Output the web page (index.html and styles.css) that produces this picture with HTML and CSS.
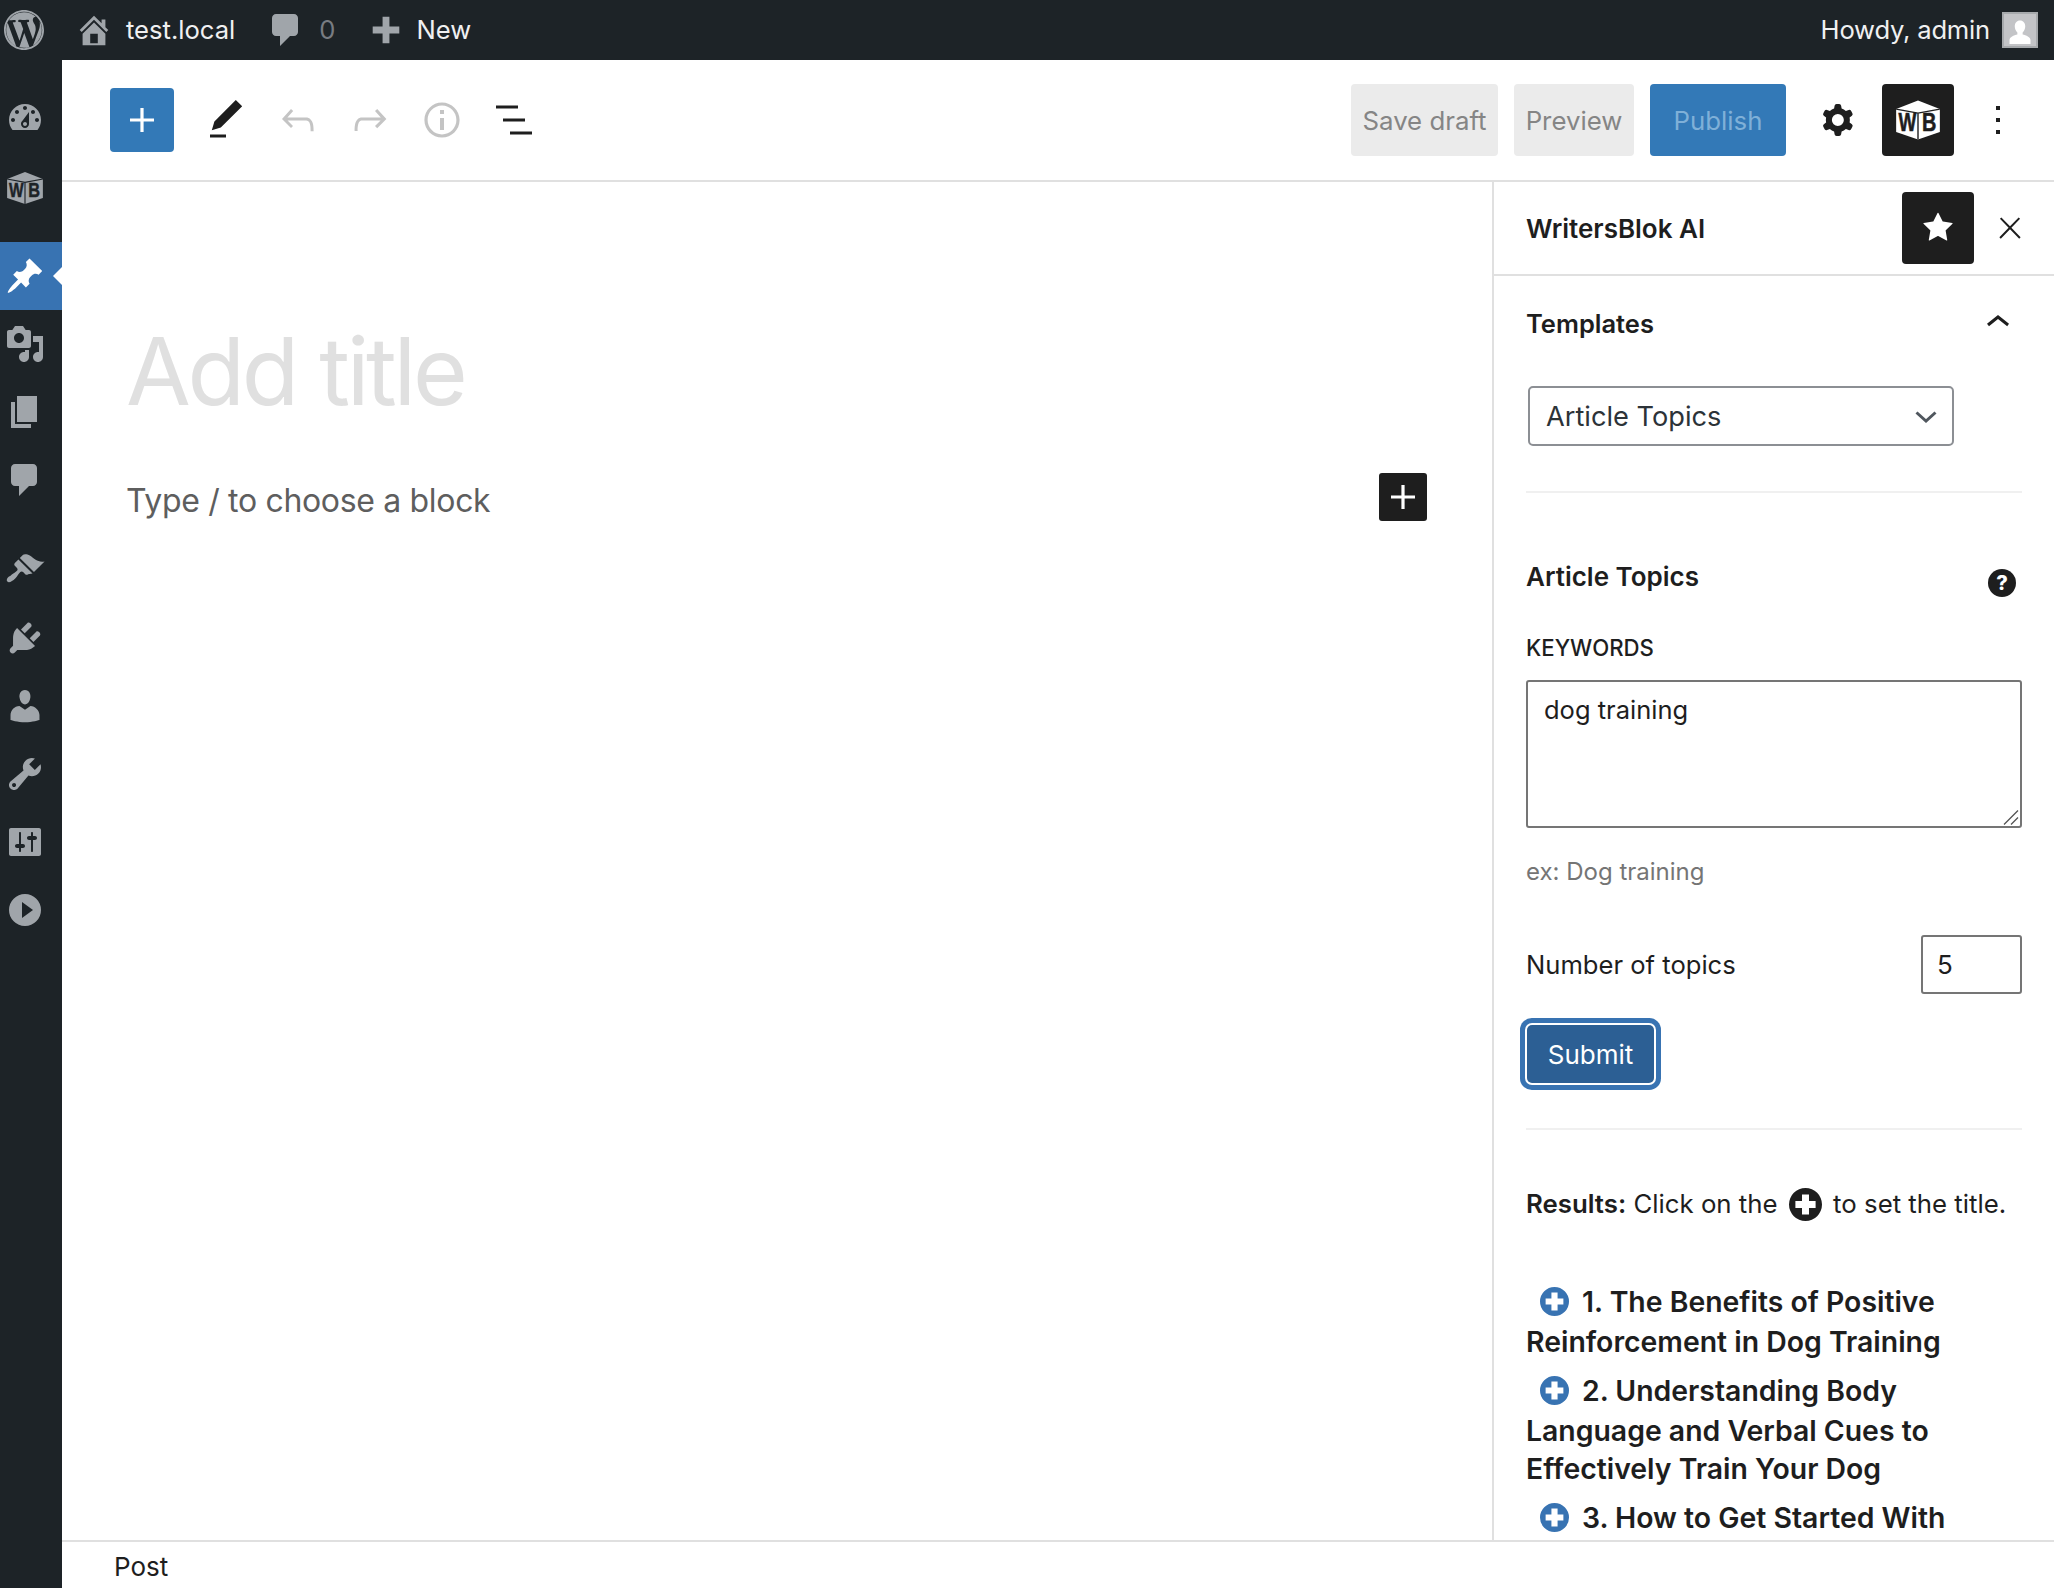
FILE: index.html
```html
<!DOCTYPE html>
<html lang="en">
<head>
    <meta charset="UTF-8">
    <title>Add New Post - test.local</title>
    <link rel="stylesheet" href="styles.css">
</head>
<body>
    <div class="adminbar">
        <svg class="bar-logo" viewBox="0 0 20 20"><path d="M10 0C4.48 0 0 4.49 0 10s4.48 10 10 10 10-4.48 10-10S15.510 0 10 0zm0 .9c5.020 0 9.100 4.080 9.100 9.100s-4.080 9.100-9.100 9.100S.9 15.020.9 10 4.980.9 10 .9zM7.780 15.370 4.370 6.220c.55-.02 1.170-.08 1.170-.08.5-.06.44-1.130-.06-1.110 0 0-1.450.11-2.370.11-.18 0-.37 0-.58-.01C4.120 2.690 6.870 1.110 10 1.110c2.330 0 4.450.87 6.050 2.340-.68-.11-1.650.39-1.650 1.580 0 .74.45 1.360.9 2.100.35.61.55 1.360.55 2.460 0 1.490-1.400 5-1.400 5l-3.030-8.370c.54-.02.82-.17.82-.17.5-.05.44-1.250-.06-1.220 0 0-1.440.12-2.380.12-.87 0-2.330-.12-2.330-.12-.5-.03-.56 1.200-.06 1.220l.92.08 1.260 3.410zM17.410 10c.24-.64.74-1.870.43-4.250.7 1.290 1.050 2.710 1.050 4.250 0 3.290-1.730 6.240-4.400 7.780.97-2.590 1.940-5.200 2.920-7.780zM6.100 18.090C3.120 16.650 1.110 13.530 1.110 10c0-1.300.23-2.480.72-3.590 1.420 3.890 2.840 7.790 4.270 11.680zm4.030-6.630 2.580 6.980c-.86.29-1.760.45-2.710.45-.79 0-1.570-.11-2.290-.33.81-2.380 1.620-4.740 2.420-7.100z" fill-rule="evenodd"/></svg>
        <svg class="bar-home" viewBox="0 0 20 20"><path d="M16 8.500l1.530 1.530-1.060 1.060L10 4.620l-6.470 6.470-1.060-1.060L10 2.500l4 4v-2h2v4zm-6-2.460 6 5.990V18H4v-5.970zM12 17v-5H8v5h4z"/></svg>
        <span class="bar-site">test.local</span>
        <svg class="bar-comment" viewBox="0 0 20 20"><path d="M5 2h9c1.100 0 2 .9 2 2v7c0 1.100-.9 2-2 2h-2l-5 5v-5H5c-1.100 0-2-.9-2-2V4c0-1.100.9-2 2-2z"/></svg>
        <span class="bar-count">0</span>
        <svg class="bar-plus" viewBox="0 0 20 20"><path d="M17 8.200v3.600h-5.200V17H8.200v-5.200H3V8.200h5.200V3h3.600v5.200z"/></svg>
        <span class="bar-new">New</span>
        <span class="bar-howdy">Howdy, admin</span>
        <span class="avatar">
            <svg viewBox="0 0 32 32"><path d="M16 5c-3.600 0-6 2.900-6 6.800 0 3 1.200 5.400 3 7v2.400c-4 1-9 2.800-9 6.300V32h24v-4.500c0-3.500-5-5.300-9-6.300v-2.400c1.800-1.600 3-4 3-7C22 7.900 19.600 5 16 5z"/></svg>
        </span>
    </div>

    <div class="wrap">
        <nav class="adminmenu">
            <a class="menu-item menu-dash"><svg viewBox="0 0 20 20"><path fill-rule="evenodd" d="M3.760 16h12.480c1.100-1.370 1.760-3.110 1.760-5 0-4.420-3.580-8-8-8s-8 3.580-8 8c0 1.890.66 3.630 1.760 5zM10 4c.55 0 1 .45 1 1s-.45 1-1 1-1-.45-1-1 .45-1 1-1zM6 6c.55 0 1 .45 1 1s-.45 1-1 1-1-.45-1-1 .45-1 1-1zm8 0c.55 0 1 .45 1 1s-.45 1-1 1-1-.45-1-1 .45-1 1-1zm-5.370 5.550L12 7v6c0 1.100-.9 2-2 2s-2-.9-2-2c0-.57.24-1.080.63-1.450zM4 10c.55 0 1 .45 1 1s-.45 1-1 1-1-.45-1-1 .45-1 1-1zm12 0c.55 0 1 .45 1 1s-.45 1-1 1-1-.45-1-1 .45-1 1-1zm-5 3c0-.55-.45-1-1-1s-1 .45-1 1 .45 1 1 1 1-.45 1-1z"/></svg></a>
            <a class="menu-item">
                <svg class="cube cube-menu" viewBox="0 0 40 34"><path class="cube-body" d="M20 0 39 7.500V27.500L20 34 1 27.500V7.500z"/><path class="cube-line" d="M1 7.500 20 11l19-3.500M20 11v23"/><text x="3" y="27" textLength="15.500" lengthAdjust="spacingAndGlyphs">W</text><text x="23.500" y="27" textLength="12.500" lengthAdjust="spacingAndGlyphs">B</text></svg>
            </a>
            <div class="menu-sep"></div>
            <a class="menu-item active"><svg viewBox="0 0 20 20"><path d="M10.440 3.020l1.820-1.820 6.360 6.350-1.830 1.820c-1.050-.68-2.480-.57-3.410.36l-.75.75c-.92.93-1.040 2.350-.35 3.410l-1.830 1.820-2.410-2.410-2.800 2.790c-.42.42-3.380 2.710-3.800 2.290s1.860-3.390 2.280-3.810l2.790-2.790L4.100 9.360l1.830-1.820c1.050.69 2.480.57 3.400-.36l.75-.75c.93-.92 1.050-2.350.36-3.410z"/></svg></a>
            <a class="menu-item"><svg viewBox="0 0 20 20"><path d="M13 11V4c0-.55-.45-1-1-1h-1.670L9 1H5L3.670 3H2c-.55 0-1 .45-1 1v7c0 .55.45 1 1 1h10c.55 0 1-.45 1-1zM7 4.500c1.380 0 2.500 1.120 2.500 2.500S8.380 9.500 7 9.500 4.500 8.380 4.500 7 5.620 4.500 7 4.500zM14 6h5v10.500c0 1.380-1.120 2.500-2.500 2.500S14 17.880 14 16.500s1.120-2.500 2.500-2.500c.17 0 .34.02.5.05V9h-3V6zm-4 8.050V13h2v3.500c0 1.380-1.120 2.500-2.500 2.500S7 17.880 7 16.500 8.120 14 9.500 14c.17 0 .34.02.5.05z"/></svg></a>
            <a class="menu-item"><svg viewBox="0 0 20 20"><path d="M6 15V2h10v13H6zm-1 1h8v2H3V5h2v11z"/></svg></a>
            <a class="menu-item"><svg viewBox="0 0 20 20"><path d="M5 2h9c1.100 0 2 .9 2 2v7c0 1.100-.9 2-2 2h-2l-5 5v-5H5c-1.100 0-2-.9-2-2V4c0-1.100.9-2 2-2z"/></svg></a>
            <div class="menu-sep menu-sep-small"></div>
            <a class="menu-item"><svg viewBox="0 0 20 20"><path d="M14.480 11.060L7.410 3.990l1.500-1.500c.5-.56 2.300-.47 3.510.32 1.210.8 1.430 1.280 2.910 2.100 1.180.64 2.450 1.260 4.450.85zm-.71.71L6.700 4.700 4.930 6.470c-.39.39-.39 1.020 0 1.410l1.060 1.060c.39.39.39 1.030 0 1.420-.6.6-1.430 1.110-2.210 1.690-.35.26-.7.53-1.010.84C1.430 13.230.4 14.980 1.200 15.800c.81.81 2.560-.22 3.910-1.570.31-.31.58-.66.85-1.010.57-.78 1.080-1.610 1.690-2.210.39-.39 1.020-.39 1.410 0l1.060 1.060c.39.39 1.020.39 1.410 0z"/></svg></a>
            <a class="menu-item"><svg viewBox="0 0 20 20"><path d="M13.110 4.360L9.870 7.600 8 5.730l3.240-3.240c.35-.34 1.050-.2 1.560.32.52.51.66 1.210.31 1.550zm-8 1.770l.91-1.120 9.010 9.010-1.190.84c-.71.71-2.630 1.160-3.820 1.160H6.140L4.900 17.260c-.59.59-1.540.59-2.120 0-.59-.58-.59-1.530 0-2.120l1.240-1.240v-3.880c0-1.130.4-3.190 1.090-3.890zm7.260 3.970l3.240-3.240c.34-.35 1.040-.21 1.550.31.52.51.66 1.210.31 1.550l-3.240 3.250z"/></svg></a>
            <a class="menu-item"><svg viewBox="0 0 20 20"><path d="M10 9.250c-2.270 0-2.730-3.440-2.730-3.440C7 4.020 7.820 2 9.970 2c2.160 0 2.980 2.020 2.710 3.810 0 0-.41 3.440-2.680 3.440zm0 2.570L12.720 10c2.390 0 4.520 2.330 4.520 4.530v2.490s-3.650 1.130-7.240 1.130c-3.650 0-7.240-1.130-7.240-1.130v-2.490c0-2.250 1.940-4.530 4.470-4.530z"/></svg></a>
            <a class="menu-item"><svg viewBox="0 0 20 20"><path fill-rule="evenodd" d="M16.680 9.770c-1.340 1.340-3.300 1.670-4.950.99l-5.410 6.520c-.99.99-2.590.99-3.580 0s-.99-2.590 0-3.570l6.520-5.420c-.68-1.650-.35-3.610.99-4.950 1.280-1.280 3.120-1.620 4.720-1.060l-2.890 2.890 2.820 2.820 2.860-2.870c.53 1.580.18 3.390-1.080 4.670zM3.810 16.210c.4.39 1.040.39 1.430 0 .4-.4.4-1.040 0-1.430-.39-.4-1.030-.4-1.430 0-.39.39-.39 1.030 0 1.430z"/></svg></a>
            <a class="menu-item"><svg viewBox="0 0 20 20"><path fill-rule="evenodd" d="M18 16V4c0-.55-.45-1-1-1H3c-.55 0-1 .45-1 1v12c0 .55.45 1 1 1h14c.55 0 1-.45 1-1zM8 11h1c.55 0 1 .45 1 1s-.45 1-1 1H8v1.500c0 .28-.22.5-.5.5s-.5-.22-.5-.5V13H6c-.55 0-1-.45-1-1s.45-1 1-1h1V5.500c0-.28.22-.5.5-.5s.5.22.5.5V11zm5-2h-1c-.55 0-1-.45-1-1s.45-1 1-1h1V5.500c0-.28.22-.5.5-.5s.5.22.5.5V7h1c.55 0 1 .45 1 1s-.45 1-1 1h-1v5.500c0 .28-.22.5-.5.5s-.5-.22-.5-.5V9z"/></svg></a>
            <a class="menu-item"><svg viewBox="0 0 20 20"><path fill-rule="evenodd" d="M10 2a8 8 0 1 0 0 16 8 8 0 0 0 0-16zM8.500 6l5.500 4-5.500 4z"/></svg></a>
        </nav>

        <div class="editor">
            <header class="toolbar">
                <button class="tool tool-add"><svg viewBox="0 0 24 24"><path d="M18 11.200h-5.200V6h-1.600v5.200H6v1.600h5.200V18h1.600v-5.200H18z"/></svg></button>
                <button class="tool tool-edit"><svg viewBox="0 0 24 24"><path d="M20.100 5.100L16.900 2 6.200 12.700l-1.300 4.400 4.500-1.300L20.100 5.100zM4 20.800h8v-1.500H4v1.500z"/></svg></button>
                <button class="tool tool-off"><svg viewBox="0 0 24 24"><path d="M18.300 11.700c-.6-.6-1.400-.9-2.300-.9H6.700l2.900-3.300-1.100-1-4.500 5L8.500 16l1-1-2.700-2.700H16c.5 0 .9.2 1.300.5 1 1 1 3.400 1 4.500v.3h1.500v-.2c0-1.500 0-4.300-1.500-5.700z"/></svg></button>
                <button class="tool tool-off"><svg viewBox="0 0 24 24"><path d="M15.600 6.500l-1.100 1 2.900 3.300H8c-.9 0-1.700.3-2.300.9-1.400 1.500-1.400 4.200-1.400 5.600v.2h1.500v-.3c0-1.100 0-3.500 1-4.500.3-.3.7-.5 1.300-.5h9.200L14.500 15l1.100 1.100 4.600-4.600-4.600-5z"/></svg></button>
                <button class="tool tool-off"><svg viewBox="0 0 24 24"><path d="M12 3.200c-4.800 0-8.800 3.900-8.800 8.800 0 4.800 3.900 8.800 8.800 8.800 4.800 0 8.800-3.900 8.800-8.800 0-4.800-4-8.800-8.800-8.800zm0 16c-4 0-7.200-3.300-7.200-7.200C4.800 8 8 4.800 12 4.800s7.200 3.300 7.200 7.200c0 4-3.200 7.200-7.200 7.200zM11 17h2v-6h-2v6zm0-8h2V7h-2v2z"/></svg></button>
                <button class="tool"><svg viewBox="0 0 24 24"><path d="M3 4.750h11v1.500H3zM6.500 11.250h11v1.500h-11zM10 17.750h11v1.500H10z"/></svg></button>
                <div class="toolbar-right">
                    <button class="btn btn-light btn-draft">Save draft</button>
                    <button class="btn btn-light btn-preview">Preview</button>
                    <button class="btn btn-publish">Publish</button>
                    <button class="tool tool-gear"><svg viewBox="0 0 24 24"><path fill-rule="evenodd" d="M10.289 4.836A1 1 0 0 1 11.275 4h1.306a1 1 0 0 1 .987.836l.244 1.466c.787.26 1.503.679 2.108 1.218l1.393-.522a1 1 0 0 1 1.216.437l.653 1.130a1 1 0 0 1-.23 1.273l-1.148.944a6.025 6.025 0 0 1 0 2.435l1.149.946a1 1 0 0 1 .23 1.272l-.653 1.130a1 1 0 0 1-1.216.437l-1.394-.522c-.605.54-1.320.958-2.108 1.218l-.244 1.466a1 1 0 0 1-.987.836h-1.306a1 1 0 0 1-.986-.836l-.244-1.466a5.995 5.995 0 0 1-2.108-1.218l-1.394.522a1 1 0 0 1-1.217-.436l-.653-1.131a1 1 0 0 1 .23-1.272l1.149-.946a6.026 6.026 0 0 1 0-2.435l-1.148-.944a1 1 0 0 1-.23-1.272l.653-1.131a1 1 0 0 1 1.217-.437l1.393.522a5.994 5.994 0 0 1 2.108-1.218l.244-1.466zM14.929 12a3 3 0 1 1-6 0 3 3 0 0 1 6 0z"/></svg></button>
                    <button class="tool-dark tool-wb">
                        <svg class="cube cube-button" viewBox="0 0 40 34"><path class="cube-body" d="M20 0 39 7.500V27.500L20 34 1 27.500V7.500z"/><path class="cube-line" d="M1 7.500 20 11l19-3.500M20 11v23"/><text x="3" y="27" textLength="15.500" lengthAdjust="spacingAndGlyphs">W</text><text x="23.500" y="27" textLength="12.500" lengthAdjust="spacingAndGlyphs">B</text></svg>
                    </button>
                    <button class="tool tool-more"><svg viewBox="0 0 24 24"><path d="M13 19h-2v-2h2v2zm0-6h-2v-2h2v2zm0-6h-2V5h2v2z"/></svg></button>
                </div>
            </header>

            <div class="content">
                <main class="canvas">
                    <div class="post-title">Add title</div>
                    <div class="block-row">
                        <span class="block-hint">Type / to choose a block</span>
                        <button class="block-add"><svg viewBox="0 0 24 24"><path d="M18 11.200h-5.200V6h-1.600v5.200H6v1.600h5.200V18h1.600v-5.200H18z"/></svg></button>
                    </div>
                </main>

                <aside class="panel">
                    <div class="panel-head">
                        <h2 class="panel-title">WritersBlok AI</h2>
                        <button class="tool-dark tool-star"><svg viewBox="0 0 24 24"><path d="M11.776 4.454a.25.25 0 0 1 .448 0l2.069 4.192a.25.25 0 0 0 .188.137l4.626.672a.25.25 0 0 1 .139.426l-3.348 3.263a.25.25 0 0 0-.072.222l.79 4.607a.25.25 0 0 1-.362.263l-4.138-2.175a.25.25 0 0 0-.232 0l-4.138 2.175a.25.25 0 0 1-.363-.263l.79-4.607a.25.25 0 0 0-.071-.222L4.754 9.881a.25.25 0 0 1 .139-.426l4.626-.672a.25.25 0 0 0 .188-.137l2.069-4.192z"/></svg></button>
                        <button class="panel-close"><svg viewBox="0 0 24 24"><path d="M13 11.800l6.100-6.300-1-1-6.100 6.200-6.100-6.200-1 1 6.100 6.300-6.500 6.700 1 1 6.500-6.600 6.500 6.600 1-1z"/></svg></button>
                    </div>

                    <div class="panel-body">
                        <div class="section-row section-templates">
                            <h3 class="section-title">Templates</h3>
                            <svg class="chevron-up" viewBox="0 0 24 24"><path d="M6.500 12.400L12 8l5.500 4.400-.9 1.200L12 10l-4.500 3.600-1-1.200z"/></svg>
                        </div>
                        <div class="select-wrap">
                            <select class="template-select"><option>Article Topics</option></select>
                            <svg class="select-arrow" viewBox="0 0 22 12"><path d="M1.500 1.500 11 10l9.500-8.500"/></svg>
                        </div>
                        <hr class="divider divider-top">

                        <div class="section-row section-article">
                            <h3 class="section-title">Article Topics</h3>
                            <span class="help">?</span>
                        </div>
                        <label class="field-label" for="keywords">KEYWORDS</label>
                        <div class="keywords-wrap">
                            <textarea class="keywords" id="keywords">dog training</textarea>
                            <svg class="grip" viewBox="0 0 16 15"><path d="M15 .5 1 14.500M15 7.500 8 14.500"/></svg>
                        </div>
                        <p class="hint">ex: Dog training</p>
                        <div class="number-row">
                            <label for="topics">Number of topics</label>
                            <input class="number" id="topics" type="number" value="5">
                        </div>
                        <button class="submit">Submit</button>
                        <hr class="divider divider-bottom">

                        <p class="results"><b>Results:</b> Click on the <svg class="plus-dark" viewBox="0 0 32 32"><path fill-rule="evenodd" d="M16 0a16 16 0 1 0 0 32 16 16 0 0 0 0-32zm-3.400 6.200h6.800v6.400h6.400v6.800h-6.400v6.400h-6.800v-6.400H6.200v-6.800h6.400z"/></svg> to set the title.</p>

                        <ul class="topics">
                            <li><svg class="plus-blue" viewBox="0 0 32 32"><path fill-rule="evenodd" d="M16 0a16 16 0 1 0 0 32 16 16 0 0 0 0-32zm-3.400 6.200h6.800v6.400h6.400v6.800h-6.400v6.400h-6.800v-6.400H6.200v-6.800h6.400z"/></svg>1. The Benefits of Positive Reinforcement in Dog Training</li>
                            <li><svg class="plus-blue" viewBox="0 0 32 32"><path fill-rule="evenodd" d="M16 0a16 16 0 1 0 0 32 16 16 0 0 0 0-32zm-3.400 6.200h6.800v6.400h6.400v6.800h-6.400v6.400h-6.800v-6.400H6.200v-6.800h6.400z"/></svg>2. Understanding Body Language and Verbal Cues to Effectively Train Your Dog</li>
                            <li><svg class="plus-blue" viewBox="0 0 32 32"><path fill-rule="evenodd" d="M16 0a16 16 0 1 0 0 32 16 16 0 0 0 0-32zm-3.400 6.200h6.800v6.400h6.400v6.800h-6.400v6.400h-6.800v-6.400H6.200v-6.800h6.400z"/></svg>3. How to Get Started With</li>
                        </ul>
                    </div>
                </aside>
            </div>

            <footer class="footer">Post</footer>
        </div>
    </div>
</body>
</html>
```

FILE: styles.css
```css
:root {
    --bar: #1d2327;
    --menu-icon: #a0a5aa;
    --ink: #1e1e1e;
    --line: #e0e0e0;
    --blue: #3379b7;
}
* {
    box-sizing: border-box;
}
html, body {
    height: 100%;
}
body {
    margin: 0;
    display: flex;
    flex-direction: column;
    overflow: hidden;
    background: #fff;
    color: var(--ink);
    font-family: Inter, "Noto Sans", sans-serif;
    font-size: 24px;
}
button {
    padding: 0;
    border: 0;
    background: none;
    font: inherit;
}
svg {
    display: block;
    fill: currentColor;
}

/* admin bar */
.adminbar {
    flex: none;
    height: 60px;
    display: flex;
    align-items: center;
    background: var(--bar);
    color: #f0f0f1;
    font-size: 25.6px;
}
.adminbar svg {
    flex: none;
    color: var(--menu-icon);
}
.bar-site, .bar-count, .bar-new, .bar-howdy {
    padding-bottom: 2px;
}
.bar-logo {
    width: 40px;
    height: 40px;
    margin-left: 4px;
}
.bar-home {
    width: 38px;
    height: 38px;
    margin-left: 31px;
}
.bar-site {
    margin-left: 13px;
}
.bar-comment {
    width: 40px;
    height: 40px;
    margin-left: 31px;
}
.bar-count {
    margin-left: 13px;
    color: #787c82;
}
.bar-plus {
    width: 38px;
    height: 38px;
    margin-left: 32px;
}
.bar-new {
    margin-left: 11px;
}
.bar-howdy {
    margin-left: auto;
    letter-spacing: -.2px;
}
.avatar {
    width: 36px;
    height: 36px;
    margin: 0 16px 0 12px;
    padding: 2px;
    border: 2px solid #a7aaad;
    background: #c3c4c7;
    overflow: hidden;
}
.avatar svg {
    width: 100%;
    height: 100%;
    color: #fff;
}

/* left menu */
.wrap {
    flex: 1;
    min-height: 0;
    display: flex;
}
.adminmenu {
    flex: none;
    width: 62px;
    padding-top: 22px;
    background: var(--bar);
    color: var(--menu-icon);
}
.menu-item {
    position: relative;
    height: 68px;
    display: flex;
    align-items: center;
    padding-left: 5px;
}
.menu-item svg {
    width: 40px;
    height: 40px;
}
.menu-dash svg {
    margin-top: 4px;
}
.menu-sep {
    height: 24px;
}
.menu-sep-small {
    height: 22px;
}
.menu-item.active {
    background: #3873b2;
    color: #fff;
}
.menu-item.active::after {
    content: "";
    position: absolute;
    right: 0;
    top: 50%;
    margin-top: -9px;
    border: 9px solid transparent;
    border-right-color: #fff;
    border-left-width: 0;
}
.cube-body {
    fill: currentColor;
}
.cube-line {
    fill: none;
    stroke: var(--bar);
    stroke-width: 1.2;
}
.cube text {
    font-family: "Liberation Sans", sans-serif;
    font-size: 22px;
    font-weight: 700;
    fill: var(--bar);
    stroke: var(--bar);
    stroke-width: .5;
}
.menu-item .cube-menu {
    width: 38px;
    height: 32px;
    margin: 8px 0 0 1px;
}

/* editor */
.editor {
    flex: 1;
    min-width: 0;
    display: flex;
    flex-direction: column;
}
.toolbar {
    flex: none;
    height: 122px;
    display: flex;
    align-items: center;
    gap: 8px;
    padding-left: 48px;
    border-bottom: 2px solid var(--line);
}
.tool {
    flex: none;
    width: 64px;
    height: 64px;
    display: flex;
    align-items: center;
    justify-content: center;
    color: var(--ink);
}
.tool svg {
    width: 48px;
    height: 48px;
}
.tool-add {
    background: var(--blue);
    border-radius: 4px;
    color: #fff;
}
.tool-edit {
    margin-left: 12px;
}
.tool-off {
    color: #c4c4c4;
}
.toolbar-right {
    margin-left: auto;
    display: flex;
    align-items: center;
}
.btn {
    height: 72px;
    border-radius: 4px;
    font-size: 25.8px;
}
.btn-light {
    background: #ebebeb;
    color: #858585;
}
.btn-draft {
    width: 147px;
}
.btn-preview {
    width: 120px;
    margin-left: 16px;
}
.btn-publish {
    width: 136px;
    margin-left: 16px;
    background: var(--blue);
    color: #7fb0d8;
}
.tool-gear {
    margin-left: 20px;
}
.tool-dark {
    flex: none;
    width: 72px;
    height: 72px;
    display: flex;
    align-items: center;
    justify-content: center;
    border-radius: 4px;
    background: var(--ink);
    color: #fff;
}
.tool-wb {
    margin-left: 12px;
}
.cube-button {
    width: 46px;
    height: 40px;
}
.cube-button .cube-line {
    stroke: var(--ink);
}
.cube-button text {
    fill: var(--ink);
    stroke: var(--ink);
}
.tool-more {
    margin-left: 12px;
    margin-right: 24px;
}

.content {
    flex: 1;
    min-height: 0;
    display: flex;
}
.canvas {
    flex: 1;
    min-width: 0;
    padding: 133px 65px 0 64px;
}
.post-title {
    color: var(--line);
    font-size: 94px;
    letter-spacing: -3.3px;
    line-height: 1.2;
}
.block-row {
    display: flex;
    align-items: center;
    justify-content: space-between;
    margin-top: 45px;
}
.block-hint {
    padding-top: 8px;
    color: #5e5e5e;
    font-size: 32px;
    letter-spacing: -.33px;
}
.block-add {
    width: 48px;
    height: 48px;
    display: flex;
    align-items: center;
    justify-content: center;
    border-radius: 3px;
    background: var(--ink);
    color: #fff;
}
.block-add svg {
    width: 48px;
    height: 48px;
}

/* settings panel */
.panel {
    flex: none;
    width: 562px;
    display: flex;
    flex-direction: column;
    border-left: 2px solid var(--line);
    overflow: hidden;
}
.panel-head {
    flex: none;
    height: 94px;
    display: flex;
    align-items: center;
    padding-left: 32px;
    border-bottom: 2px solid var(--line);
}
.panel-title {
    margin: 0;
    font-size: 26px;
    font-weight: 600;
}
.tool-star {
    margin-left: auto;
}
.tool-star svg {
    width: 48px;
    height: 48px;
}
.panel-close {
    flex: none;
    width: 34px;
    height: 34px;
    margin: 0 27px 0 19px;
    color: var(--ink);
}
.panel-close svg {
    width: 100%;
    height: 100%;
}
.panel-body {
    flex: 1;
    min-height: 0;
    padding: 0 32px;
    overflow: hidden;
}
.section-row {
    display: flex;
    align-items: center;
    justify-content: space-between;
}
.section-templates {
    padding-top: 25px;
}
.section-title {
    margin: 0;
    font-size: 26px;
    line-height: 32px;
    font-weight: 600;
}
.section-templates .section-title {
    font-size: 25.5px;
}
.chevron-up {
    width: 48px;
    height: 48px;
    margin: -2px 0 0;
}
.select-wrap {
    position: relative;
    width: 426px;
    margin: 39px 0 0 2px;
}
.template-select {
    display: block;
    width: 100%;
    height: 60px;
    padding: 0 16px;
    border: 2px solid #8c8f94;
    border-radius: 5px;
    background: #fff;
    color: #2c3338;
    font: inherit;
    font-size: 27.2px;
    appearance: none;
}
.select-arrow {
    position: absolute;
    right: 17px;
    top: 25px;
    width: 22px;
    height: 12px;
    fill: none;
    stroke: #50575e;
    stroke-width: 3;
}
.divider {
    height: 2px;
    margin: 0;
    border: 0;
    background: #f0f0f0;
}
.divider-top {
    margin-top: 45px;
}
.section-article {
    margin-top: 63px;
    padding-right: 6px;
}
.help {
    width: 28px;
    height: 28px;
    display: flex;
    align-items: center;
    justify-content: center;
    margin-top: 13px;
    border-radius: 50%;
    background: var(--ink);
    color: #fff;
    font-size: 20px;
    font-weight: 800;
}
.field-label {
    display: block;
    margin-top: 35px;
    font-size: 22.2px;
    font-weight: 500;
    line-height: 32px;
}
.keywords-wrap {
    position: relative;
    margin-top: 16px;
}
.keywords {
    display: block;
    width: 100%;
    height: 148px;
    padding: 11px 16px;
    border: 2px solid #757575;
    border-radius: 3px;
    color: var(--ink);
    font: inherit;
    font-size: 25.5px;
    line-height: 34px;
    resize: none;
}
.grip {
    position: absolute;
    right: 3px;
    bottom: 3px;
    width: 16px;
    height: 15px;
    fill: none;
    stroke: #555;
    stroke-width: 1.3;
}
.hint {
    margin: 28px 0 0;
    color: #757575;
    font-size: 24px;
    line-height: 32px;
}
.number-row {
    display: flex;
    align-items: center;
    justify-content: space-between;
    margin-top: 47px;
    font-size: 25.6px;
}
.number {
    width: 101px;
    height: 59px;
    padding: 0 14px;
    border: 2px solid #757575;
    border-radius: 3px;
    color: var(--ink);
    font: inherit;
    font-size: 26px;
}
.submit {
    display: block;
    width: 127px;
    height: 58px;
    margin: 31px 0 0 1px;
    border-radius: 5px;
    background: #2c5f94;
    box-shadow: 0 0 0 2px #fff, 0 0 0 7px #3873b2;
    color: #fff;
    font-size: 26px;
}
.divider-bottom {
    margin-top: 45px;
}
.results {
    display: flex;
    align-items: center;
    margin: 57px 0 0;
    font-size: 25.8px;
    line-height: 34px;
    white-space: pre;
}
.results b {
    font-weight: 600;
}
.plus-dark {
    flex: none;
    width: 33px;
    height: 33px;
    margin: 0 4px;
}
.topics {
    margin: 62px 0 0;
    padding: 0;
    list-style: none;
    font-size: 28.4px;
    font-weight: 600;
    line-height: 38px;
}
.topics li {
    margin-bottom: 11px;
}
.plus-blue {
    display: inline-block;
    width: 29px;
    height: 29px;
    margin: 0 13px 7px 14px;
    vertical-align: -11px;
    color: #3873b2;
}

.footer {
    flex: none;
    position: relative;
    height: 48px;
    padding: 9px 0 0 52px;
    border-top: 2px solid var(--line);
    background: #fff;
    font-size: 26px;
    line-height: 32px;
}
```
